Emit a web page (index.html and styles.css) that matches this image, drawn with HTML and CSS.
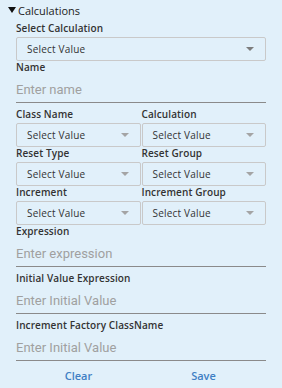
FILE: index.html
```html
<!DOCTYPE html>
<html lang="en">
<head>
  <meta charset="UTF-8">
  <meta name="viewport" content="width=device-width, initial-scale=1.0">
  <title>Calculations</title>
  <link rel="stylesheet" href="styles.css">
</head>
<body>
  <div class="panel">
    <div class="panel-title"><span class="caret"></span>Calculations</div>
    <form class="calc-form">
      <label class="field-label first">Select Calculation</label>
      <div class="select"><span>Select Value</span><i class="arrow dark"></i></div>

      <label class="field-label">Name</label>
      <input class="line-input" type="text" placeholder="Enter name">

      <div class="grid">
        <div>
          <label class="field-label">Class Name</label>
          <div class="select"><span>Select Value</span><i class="arrow"></i></div>
        </div>
        <div>
          <label class="field-label">Calculation</label>
          <div class="select"><span>Select Value</span><i class="arrow"></i></div>
        </div>
        <div>
          <label class="field-label">Reset Type</label>
          <div class="select"><span>Select Value</span><i class="arrow"></i></div>
        </div>
        <div>
          <label class="field-label">Reset Group</label>
          <div class="select"><span>Select Value</span><i class="arrow"></i></div>
        </div>
        <div>
          <label class="field-label">Increment</label>
          <div class="select"><span>Select Value</span><i class="arrow"></i></div>
        </div>
        <div>
          <label class="field-label">Increment Group</label>
          <div class="select"><span>Select Value</span><i class="arrow"></i></div>
        </div>
      </div>

      <label class="field-label">Expression</label>
      <input class="line-input" type="text" placeholder="Enter expression">

      <label class="field-label">Initial Value Expression</label>
      <input class="line-input" type="text" placeholder="Enter Initial Value">

      <label class="field-label">Increment Factory ClassName</label>
      <input class="line-input" type="text" placeholder="Enter Initial Value">

      <div class="actions">
        <button type="button">Clear</button>
        <button type="button">Save</button>
      </div>
    </form>
  </div>
</body>
</html>
```

FILE: styles.css
```css
body {
  margin: 0;
  background: #e1f0fa;
  font-family: "Open Sans", Arial, sans-serif;
  color: #333;
}
.panel {
  padding: 2px 16px 0 8px;
}
.panel-title {
  display: flex;
  align-items: center;
  height: 16px;
  font-size: 11px;
  color: #222;
}
.caret {
  width: 0;
  height: 0;
  border-left: 4px solid transparent;
  border-right: 4px solid transparent;
  border-top: 6px solid #111;
  margin-right: 2px;
}
.calc-form {
  margin-left: 8px;
  width: 250px;
  display: flex;
  flex-direction: column;
}
.field-label {
  display: block;
  font-size: 10px;
  font-weight: 600;
  line-height: 13px;
  margin-bottom: 2px;
  white-space: nowrap;
  letter-spacing: 0.1px;
}
.field-label.first {
  margin-top: 4px;
}
.select {
  box-sizing: border-box;
  height: 24px;
  border: 1px solid #c9c9c9;
  border-radius: 2px;
  display: flex;
  align-items: center;
  justify-content: space-between;
  padding: 0 11px 0 10px;
  font-size: 10px;
  color: #333;
  letter-spacing: 0.2px;
}
.arrow {
  width: 0;
  height: 0;
  border-left: 4px solid transparent;
  border-right: 4px solid transparent;
  border-top: 4px solid #a4a4a4;
}
.arrow.dark {
  border-top-color: #7d7d7d;
}
.line-input {
  box-sizing: border-box;
  height: 27px;
  width: 100%;
  border: none;
  border-bottom: 1px solid #8a8a8a;
  background: transparent;
  padding: 0;
  font-family: Roboto, Arial, sans-serif;
  font-size: 13px;
  color: #333;
  outline: none;
  margin-bottom: 5px;
}
.line-input::placeholder {
  color: #a0a0a0;
}
.grid {
  display: grid;
  grid-template-columns: 1fr 1fr;
  column-gap: 1px;
}
.actions {
  display: grid;
  grid-template-columns: 1fr 1fr;
  margin-top: -4px;
}
.actions button {
  background: none;
  border: none;
  height: 26px;
  font-family: "Open Sans", Arial, sans-serif;
  font-size: 11px;
  font-weight: 600;
  color: #3f7fc4;
  cursor: pointer;
}
```
